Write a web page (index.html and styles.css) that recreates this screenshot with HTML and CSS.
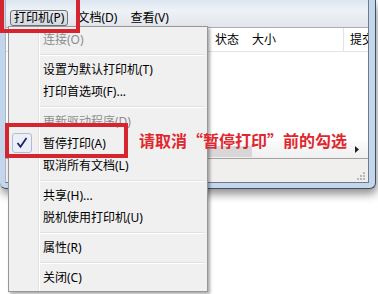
FILE: index.html
```html
<!DOCTYPE html>
<html lang="zh-CN">
<head>
<meta charset="utf-8">
<link rel="stylesheet" href="styles.css">
</head>
<body>
<div class="stage">
  <div class="window">
    <div class="client">
      <div class="menubar">
        <span class="mb-item active">打印机(P)</span>
        <span class="mb-item">文档(D)</span>
        <span class="mb-item">查看(V)</span>
      </div>
      <div class="header">
        <span class="col c-name"></span>
        <span class="col c-status">状态</span>
        <span class="col c-size">大小</span>
        <span class="col c-submit">提交者</span>
      </div>
      <div class="list"></div>
      <div class="hscroll">
        <div class="thumb"></div>
        <div class="arrow"><svg width="5" height="7" viewBox="0 0 5 7"><path d="M0 0 L4 3.5 L0 7 Z" fill="#222"/></svg></div>
      </div>
      <div class="status">
        <svg class="grip" width="10" height="10" viewBox="0 0 10 10">
          <rect x="7" y="1" width="2" height="2" fill="#b8b8b8"/>
          <rect x="4" y="4" width="2" height="2" fill="#b8b8b8"/>
          <rect x="7" y="4" width="2" height="2" fill="#b8b8b8"/>
          <rect x="1" y="7" width="2" height="2" fill="#b8b8b8"/>
          <rect x="4" y="7" width="2" height="2" fill="#b8b8b8"/>
          <rect x="7" y="7" width="2" height="2" fill="#b8b8b8"/>
        </svg>
      </div>
    </div>
  </div>

  <div class="menu">
    <div class="mi disabled">连接(O)</div>
    <div class="sep"></div>
    <div class="mi">设置为默认打印机(T)</div>
    <div class="mi">打印首选项(F)...</div>
    <div class="sep"></div>
    <div class="mi disabled">更新驱动程序(D)</div>
    <div class="mi">
      <span class="check"><svg width="20" height="20" viewBox="0 0 20 20"><path d="M5.5 10 L8.5 13.8 L14.5 5" fill="none" stroke="#17256b" stroke-width="1.8"/></svg></span>暂停打印(A)
    </div>
    <div class="mi">取消所有文档(L)</div>
    <div class="sep"></div>
    <div class="mi">共享(H)...</div>
    <div class="mi">脱机使用打印机(U)</div>
    <div class="sep"></div>
    <div class="mi">属性(R)</div>
    <div class="sep"></div>
    <div class="mi">关闭(C)</div>
  </div>

  <div class="mark mark-menu"></div>
  <div class="mark mark-item"></div>
  <div class="note">请取消“暂停打印”前的勾选</div>
</div>
</body>
</html>
```

FILE: styles.css
```css
* { box-sizing: border-box; }
html, body { margin: 0; padding: 0; }
body {
  width: 378px;
  height: 294px;
  overflow: hidden;
  background: #fff;
  font-family: "Noto Sans", "Noto Sans CJK SC", sans-serif;
  font-size: 12px;
  color: #000;
}
.stage { position: relative; width: 378px; height: 294px; overflow: hidden; }

/* window */
.window {
  width: 376px;
  padding: 0 6px 5px 5px;
  background: #c3d6ec;
  border-right: 1px solid #44505e;
  border-bottom: 1px solid #44505e;
  border-radius: 0 0 6px 6px;
  box-shadow: 1px 5px 10px rgba(0, 0, 0, 0.45);
}
.client {
  display: flex;
  flex-direction: column;
  border-left: 1px solid #a9b8c9;
  border-right: 1px solid #6c7b8c;
  border-bottom: 1px solid #6c7b8c;
}
.menubar {
  height: 27px;
  display: flex;
  align-items: flex-start;
  gap: 5px;
  padding: 10px 0 0 4px;
  background: linear-gradient(#dce6f1, #eef2f6 40%, #e2e6eb);
}
.mb-item {
  height: 16px;
  line-height: 14px;
  padding: 0 3px;
  border: 1px solid transparent;
  border-radius: 3px;
  white-space: nowrap;
}
.mb-item.active {
  border-color: #6f747b;
  background: linear-gradient(#e6e9ed, #d3d9df);
}

.header {
  display: flex;
  height: 25px;
  border-top: 1px solid #a5aeb9;
  border-bottom: 1px solid #e3e3e3;
  background: #fff;
}
.col {
  padding: 4px 0 0 5px;
  line-height: 16px;
  white-space: nowrap;
  overflow: hidden;
  border-right: 1px solid transparent;
}
.c-name { width: 204px; }
.c-status { width: 37px; }
.c-size { width: 97px; border-right-color: #e3e3e3; }
.c-submit { flex: 1; padding-left: 6px; border-right: 0; }

.list { height: 89px; background: #fff; }

.hscroll {
  height: 17px;
  display: flex;
  align-items: flex-end;
  background: linear-gradient(#fbfbfb, #efefef);
}
.thumb {
  width: 229px;
  height: 11px;
  margin: 0 0 1px 17px;
  background: #d7d7d7;
}
.arrow {
  margin-left: auto;
  width: 17px;
  height: 17px;
  display: flex;
  align-items: center;
  justify-content: center;
  padding-right: 4px;
}
.arrow svg { display: block; }

.status {
  height: 24px;
  border-top: 1px solid #a3a3a3;
  background: #f0efed;
  display: flex;
  justify-content: flex-end;
  align-items: flex-end;
  padding: 0 2px 1px 0;
}
.grip { display: block; }

/* drop-down menu */
.menu {
  position: absolute;
  left: 8px;
  top: 26px;
  width: 200px;
  padding: 2px;
  border: 1px solid #979797;
  background:
    linear-gradient(to right, transparent 29px, #e2e3e3 29px, #e2e3e3 30px, #fff 30px, #fff 31px, transparent 31px) no-repeat,
    #f0f0f0;
  box-shadow: 2px 2px 3px rgba(0, 0, 0, 0.35);
}
.mi {
  position: relative;
  height: 22px;
  line-height: 22px;
  padding-left: 32px;
  white-space: nowrap;
}
.mi.disabled { color: #8d8d8d; }
.sep {
  margin: 3px 0 3px 29px;
  border-top: 1px solid #e0e0e0;
  border-bottom: 1px solid #fff;
}
.check {
  position: absolute;
  left: 1px;
  top: 0;
  width: 20px;
  height: 20px;
  border: 1px solid #aebcd6;
  border-radius: 3px;
  background: #eceff8;
}
.check svg { position: absolute; left: -1px; top: -1px; display: block; }

/* annotations */
.mark {
  position: absolute;
  border: 4px solid #d7252f;
}
.mark-menu { left: 0; top: -5px; width: 80px; height: 38px; }
.mark-item { left: 5px; top: 123px; width: 123px; height: 35px; }
.note {
  position: absolute;
  left: 139px;
  top: 132px;
  font-family: "Noto Sans CJK SC", sans-serif;
  font-weight: bold;
  font-size: 16px;
  line-height: 16px;
  color: #e0272e;
  white-space: nowrap;
}
```
